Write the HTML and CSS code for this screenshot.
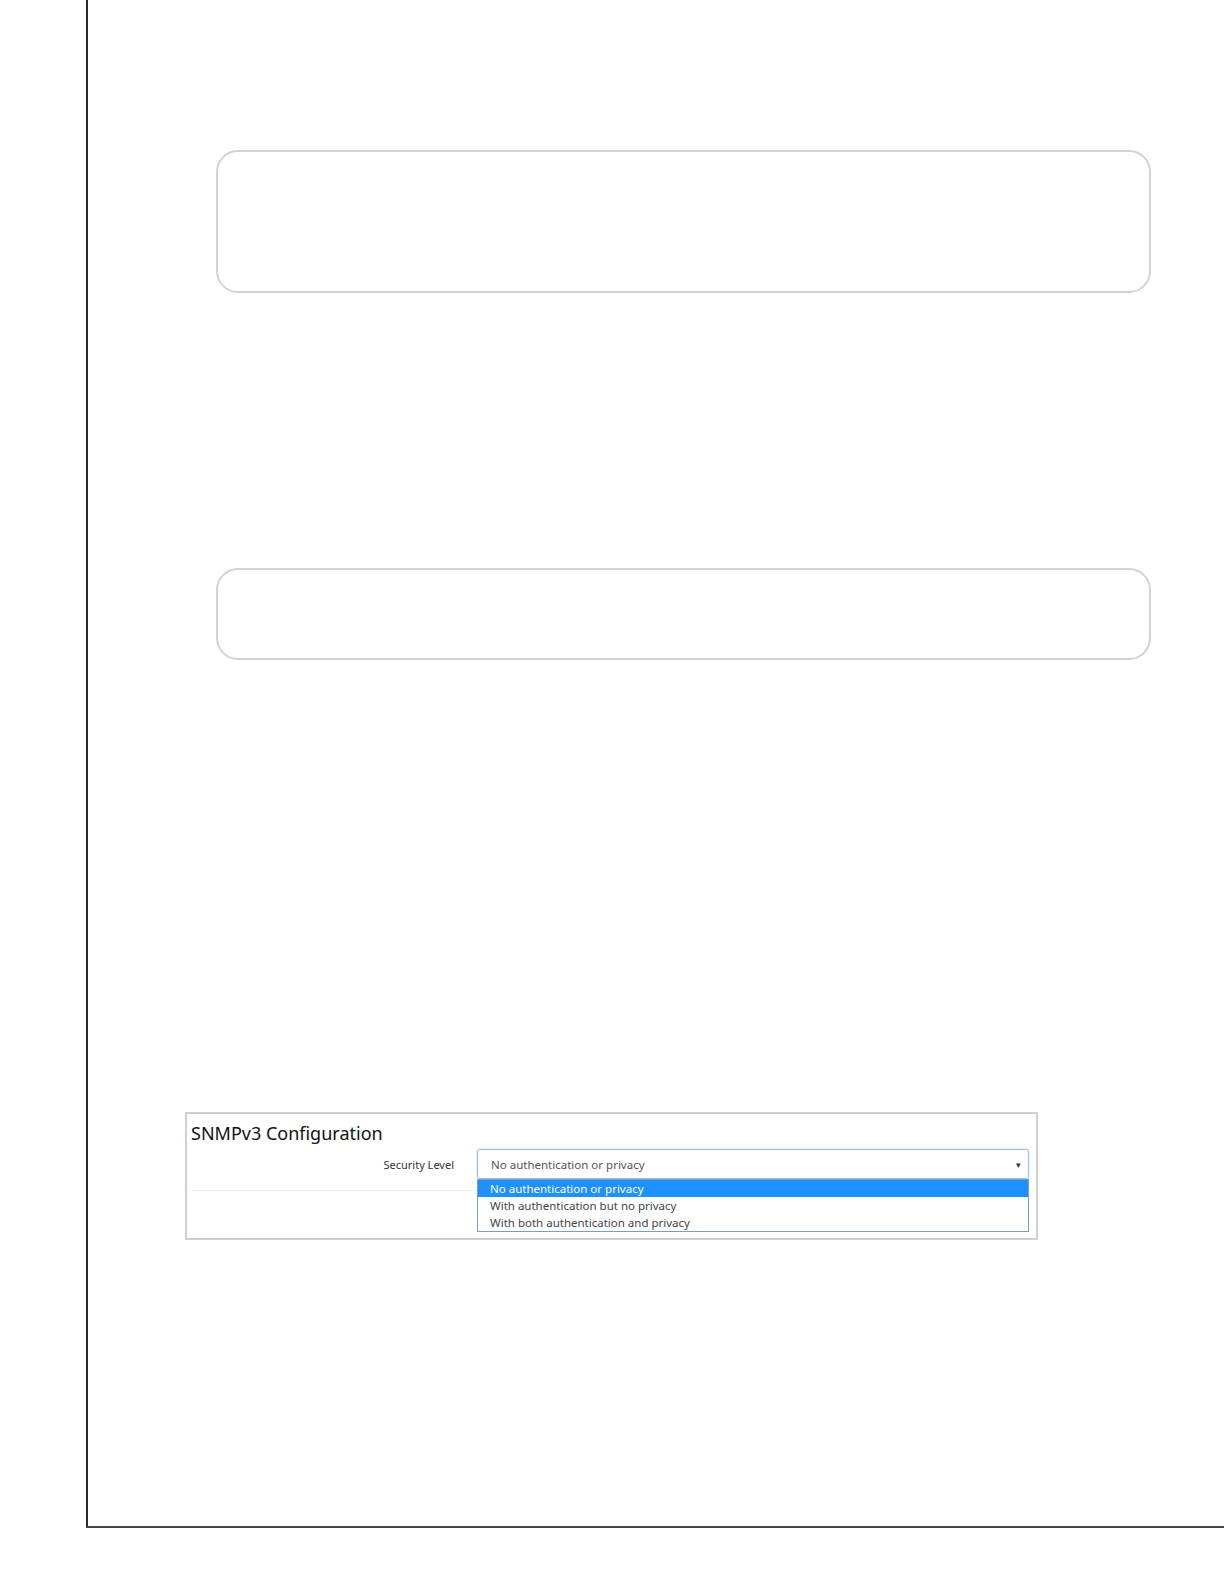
FILE: index.html
```html
<!DOCTYPE html>
<html lang="en">
<head>
    <meta charset="UTF-8">
    <title>SNMPv3 Configuration</title>
    <link rel="stylesheet" href="styles.css">
</head>
<body>
    <div class="page">
        <div class="frame frame-tall"></div>
        <div class="frame frame-short"></div>

        <section class="panel">
            <h3>SNMPv3 Configuration</h3>
            <div class="row">
                <label for="security-level">Security Level</label>
                <div class="select-wrap">
                    <div class="select" id="security-level">
                        No authentication or privacy
                        <span class="caret">&#9662;</span>
                    </div>
                    <ul class="options">
                        <li class="selected">No authentication or privacy</li>
                        <li>With authentication but no privacy</li>
                        <li>With both authentication and privacy</li>
                    </ul>
                </div>
            </div>
        </section>
    </div>
</body>
</html>
```

FILE: styles.css
```css
body {
    margin: 0;
    background-color: #ffffff;
    font-family: "Noto Sans", "Open Sans", sans-serif;
}

.page {
    display: flex;
    flex-direction: column;
    align-items: flex-start;
    box-sizing: border-box;
    margin-left: 86px;
    height: 1528px;
    border-left: 2px solid #2b2b2b;
    border-bottom: 2px solid #444444;
}

.frame {
    box-sizing: border-box;
    margin-left: 128px;
    width: 935px;
    border: 2px solid #d2d2d2;
    border-radius: 22px;
}

.frame-tall {
    margin-top: 150px;
    height: 143px;
}

.frame-short {
    margin-top: 275px;
    height: 92px;
}

.panel {
    box-sizing: border-box;
    margin-top: 452px;
    margin-left: 97px;
    width: 853px;
    height: 128px;
    border: 2px solid #d0d0d0;
}

.panel h3 {
    margin: 0;
    padding: 8px 4px 0;
    font-size: 18px;
    font-weight: 400;
    line-height: 22px;
    color: #111111;
}

.row {
    display: flex;
    align-items: flex-start;
    gap: 23px;
    margin: 5px 7px 0 4px;
    padding-bottom: 11px;
    border-bottom: 1px solid #eeeeee;
}

.row label {
    width: 263px;
    padding-top: 8px;
    text-align: right;
    font-size: 11px;
    color: #333333;
}

.select-wrap {
    position: relative;
    width: 552px;
}

.select {
    display: flex;
    align-items: center;
    justify-content: space-between;
    box-sizing: border-box;
    height: 30px;
    padding: 0 7px 0 13px;
    border: 1px solid #8fc3f0;
    border-radius: 3px;
    box-shadow: 0 0 2px rgba(102, 175, 233, 0.5);
    font-size: 11.5px;
    color: #555555;
}

.caret {
    font-size: 9px;
    color: #333333;
}

.options {
    position: absolute;
    top: 100%;
    left: 0;
    right: 0;
    margin: 0;
    padding: 0;
    list-style: none;
    background-color: #ffffff;
    border: 1px solid #7f9db9;
}

.options li {
    height: 17px;
    padding-left: 12px;
    font-size: 11.5px;
    line-height: 17px;
    color: #444444;
}

.options li.selected {
    background-color: #1e90ff;
    color: #ffffff;
}
```
